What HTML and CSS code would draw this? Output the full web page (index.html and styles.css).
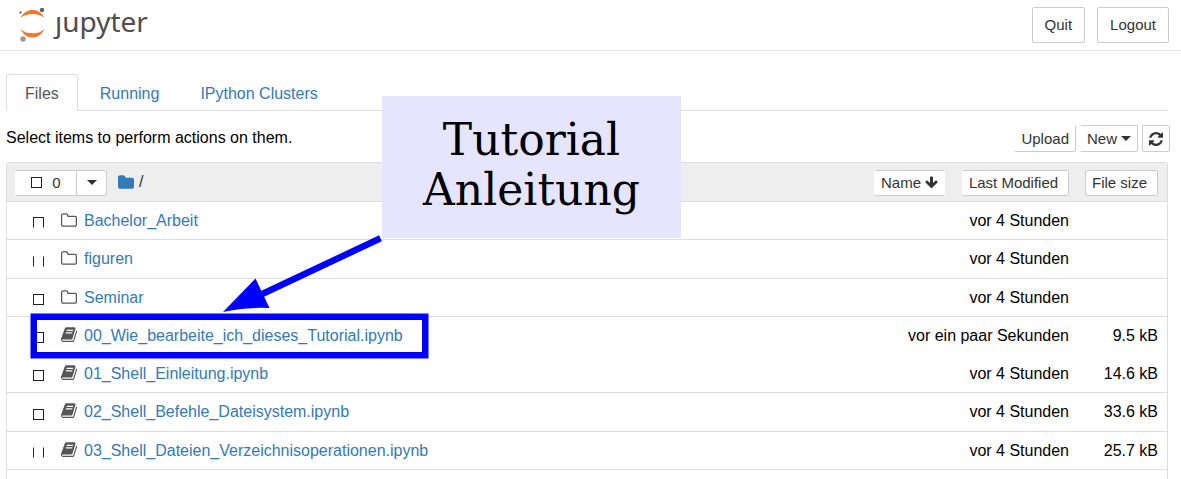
FILE: index.html
```html
<!DOCTYPE html>
<html lang="de">
<head>
<meta charset="utf-8">
<title>Jupyter – Tutorial Anleitung</title>
<link rel="stylesheet" href="styles.css">
</head>
<body>
<svg class="defs" aria-hidden="true">
  <symbol id="folder-o" viewBox="0 0 1664 1664"><path d="M1536 1312v-704q0-40-28-68t-68-28h-704q-40 0-68-28t-28-68v-64q0-40-28-68t-68-28h-320q-40 0-68 28t-28 68v960q0 40 28 68t68 28h1216q40 0 68-28t28-68zm128-704v704q0 92-66 158t-158 66h-1216q-92 0-158-66t-66-158v-960q0-92 66-158t158-66h320q92 0 158 66t66 158v32h672q92 0 158 66t66 158z"/></symbol>
  <symbol id="folder" viewBox="0 0 1664 1664"><path d="M1664 608v704q0 92-66 158t-158 66h-1216q-92 0-158-66t-66-158v-960q0-92 66-158t158-66h320q92 0 158 66t66 158v32h672q92 0 158 66t66 158z"/></symbol>
  <symbol id="book" viewBox="64 96 1664 1664"><path d="M1703 478q40 57 18 129l-275 906q-19 64-76.500 107.500t-122.500 43.500h-923q-77 0-148.500-53.500t-99.500-131.500q-24-67-2-127 0-4 3-27t4-37q1-8-3-21.500t-3-19.500q2-11 8-21t16.500-23.500 16.500-23.500q23-38 45-91.500t30-91.500q3-10 .5-30t-.5-28q3-11 17-28t17-23q21-36 42-92t25-90q1-9-2.500-32t.5-28q4-13 22-30.500t22-22.500q19-26 42.500-84.500t27.500-96.500q1-8-3-25.500t-2-26.500q2-8 9-18t18-23 17-21q8-12 16.500-30.500t15-35 16-36 19.500-32 26.500-23.500 36-11.500 47.500 5.500l-1 3q38-9 51-9h761q74 0 114 56t18 130l-274 906q-36 119-71.500 153.500t-128.500 34.500h-869q-27 0-38 15-11 16-1 43 24 70 144 70h923q29 0 56-15.500t35-41.500l300-987q7-22 5-57 38 15 59 43zm-1064 2q-4 13 2 22.500t20 9.500h608q13 0 25.500-9.500t16.500-22.500l21-64q4-13-2-22.500t-20-9.500h-608q-13 0-25.500 9.500t-16.500 22.500zm-83 256q-4 13 2 22.500t20 9.500h608q13 0 25.500-9.500t16.500-22.500l21-64q4-13-2-22.500t-20-9.500h-608q-13 0-25.500 9.500t-16.500 22.500z"/></symbol>
  <symbol id="refresh" viewBox="128 128 1536 1536"><path d="M1639 1056q0 5-1 7-64 268-268 434.500t-478 166.500q-146 0-282.500-55t-243.500-157l-129 129q-19 19-45 19t-45-19-19-45v-448q0-26 19-45t45-19h448q26 0 45 19t19 45-19 45l-137 137q71 66 161 102t187 36q134 0 250-65t186-179q11-17 53-117 8-23 30-23h192q13 0 22.500 9.500t9.500 22.500zm25-800v448q0 26-19 45t-45 19h-448q-26 0-45-19t-19-45 19-45l138-138q-148-137-349-137-134 0-250 65t-186 179q-11 17-53 117-8 23-30 23h-199q-13 0-22.500-9.500t-9.500-22.500v-7q65-268 270-434.500t480-166.500q146 0 284 55.500t245 156.500l130-129q19-19 45-19t45 19 19 45z"/></symbol>
  <symbol id="arrow-down" viewBox="64 64 1664 1664"><path d="M1675 832q0 53-37 90l-651 652q-39 37-91 37-53 0-90-37l-651-652q-38-36-38-90 0-53 38-91l74-75q39-37 91-37 53 0 90 37l294 294v-704q0-52 38-90t90-38h128q52 0 90 38t38 90v704l294-294q37-37 90-37 52 0 91 37l75 75q37 39 37 91z"/></symbol>
  <symbol id="caret" viewBox="0 0 10 5"><path d="M0 0H10L5 5z"/></symbol>
</svg>

<header class="header">
  <a class="logo" href="#" aria-label="jupyter">
    <svg class="logo-mark" viewBox="0 0 28 36" aria-hidden="true">
      <path fill="#f37726" d="M1.500 11C4 5.500 9 3 13.500 3S23 5.500 25.500 11C22 8 18 7 13.500 7S5 8 1.500 11zM1.500 22C4 28 9 30.500 13.500 30.500S23 28 25.500 22C22 25.300 18 26.300 13.500 26.300S5 25.300 1.500 22z"/>
      <circle cx="23" cy="3" r="2.200" fill="#616262"/>
      <circle cx="1.500" cy="5.500" r="1.200" fill="#767677"/>
      <circle cx="4" cy="32" r="2.700" fill="#989798"/>
    </svg>
    <span class="logo-text">ȷupyter</span>
  </a>
  <div class="session">
    <button class="btn btn-large" type="button">Quit</button>
    <button class="btn btn-large" type="button">Logout</button>
  </div>
</header>

<main class="main">
  <nav class="tabs">
    <a class="tab tab-active" href="#files">Files</a>
    <a class="tab" href="#running">Running</a>
    <a class="tab" href="#clusters">IPython Clusters</a>
  </nav>

  <div class="toolbar">
    <p class="hint">Select items to perform actions on them.</p>
    <div class="actions">
      <button class="btn btn-medium open-left open-top" type="button">Upload</button>
      <button class="btn btn-medium open-left" type="button">New <svg class="caret"><use href="#caret"/></svg></button>
      <button class="btn btn-medium" type="button" aria-label="Refresh"><svg class="icon-refresh"><use href="#refresh"/></svg></button>
    </div>
  </div>

  <section class="panel" id="files">
    <table class="files">
      <thead>
        <tr>
          <th>
            <div class="head-left">
              <div class="select-group">
                <label class="btn btn-small select-all open-left"><input class="tick" type="checkbox" aria-label="Select all">0</label>
                <button class="btn btn-small select-menu" type="button" aria-label="Select menu"><svg class="caret"><use href="#caret"/></svg></button>
              </div>
              <a class="crumb" href="#" aria-label="Home"><svg class="icon"><use href="#folder"/></svg></a>
              <span class="slash">/</span>
            </div>
          </th>
          <th>
            <div class="head-right">
              <button class="btn btn-small open-left open-right" type="button">Name <svg class="icon-small"><use href="#arrow-down"/></svg></button>
              <button class="btn btn-small open-left last-modified" type="button">Last Modified</button>
            </div>
          </th>
          <th class="size"><div class="head-right"><button class="btn btn-small file-size" type="button">File size</button></div></th>
        </tr>
      </thead>
      <tbody>
        <tr>
          <td><div class="item"><input class="tick open-bottom" type="checkbox" aria-label="Bachelor_Arbeit"><svg class="icon"><use href="#folder-o"/></svg><a href="#">Bachelor_Arbeit</a></div></td>
          <td class="time">vor 4 Stunden</td><td class="size"></td>
        </tr>
        <tr>
          <td><div class="item"><input class="tick open-bottom open-top" type="checkbox" aria-label="figuren"><svg class="icon"><use href="#folder-o"/></svg><a href="#">figuren</a></div></td>
          <td class="time">vor 4 Stunden</td><td class="size"></td>
        </tr>
        <tr>
          <td><div class="item"><input class="tick" type="checkbox" aria-label="Seminar"><svg class="icon"><use href="#folder-o"/></svg><a href="#">Seminar</a></div></td>
          <td class="time">vor 4 Stunden</td><td class="size"></td>
        </tr>
        <tr class="current">
          <td><div class="item"><input class="tick" type="checkbox" aria-label="00_Wie_bearbeite_ich_dieses_Tutorial.ipynb"><svg class="icon"><use href="#book"/></svg><a href="#">00_Wie_bearbeite_ich_dieses_Tutorial.ipynb</a></div></td>
          <td class="time">vor ein paar Sekunden</td><td class="size">9.5 kB</td>
        </tr>
        <tr>
          <td><div class="item"><input class="tick" type="checkbox" aria-label="01_Shell_Einleitung.ipynb"><svg class="icon"><use href="#book"/></svg><a href="#">01_Shell_Einleitung.ipynb</a></div></td>
          <td class="time">vor 4 Stunden</td><td class="size">14.6 kB</td>
        </tr>
        <tr>
          <td><div class="item"><input class="tick" type="checkbox" aria-label="02_Shell_Befehle_Dateisystem.ipynb"><svg class="icon"><use href="#book"/></svg><a href="#">02_Shell_Befehle_Dateisystem.ipynb</a></div></td>
          <td class="time">vor 4 Stunden</td><td class="size">33.6 kB</td>
        </tr>
        <tr>
          <td><div class="item"><input class="tick open-bottom open-top" type="checkbox" aria-label="03_Shell_Dateien_Verzeichnisoperationen.ipynb"><svg class="icon"><use href="#book"/></svg><a href="#">03_Shell_Dateien_Verzeichnisoperationen.ipynb</a></div></td>
          <td class="time">vor 4 Stunden</td><td class="size">25.7 kB</td>
        </tr>
      </tbody>
    </table>
  </section>
</main>

<svg class="pointer" viewBox="0 0 440 370" aria-hidden="true">
  <rect x="33.750" y="316.750" width="391.500" height="38.500" fill="none" stroke="#00f" stroke-width="6.500"/>
  <path d="M380.500 238.300L258 296" stroke="#00f" stroke-width="6.500"/>
  <path d="M223 312L255.500 278.500L269.500 308Q245 307 223 312z" fill="#00f"/>
</svg>
<aside class="note">Tutorial<br>Anleitung</aside>
</body>
</html>
```

FILE: styles.css
```css
* { box-sizing: border-box; }

body {
  display: flex;
  flex-direction: column;
  position: relative;
  min-height: 100vh;
  margin: 0;
  background: #fff;
  color: #000;
  font: 16px/20px "Liberation Sans", Arial, sans-serif;
}

a { color: #337ab7; text-decoration: none; }
svg { flex: none; fill: currentColor; }
.defs { position: absolute; width: 0; height: 0; }
.icon { width: 16px; height: 16px; }
.icon-small { width: 13px; height: 13px; }
.icon-refresh { width: 14px; height: 14px; }
.caret { width: 10px; height: 5px; }

.header {
  display: flex;
  justify-content: space-between;
  align-items: flex-start;
  height: 51px;
  padding: 7px 12px 0 19px;
  border-bottom: 1px solid #e7e7e7;
}
.logo { display: flex; gap: 8px; color: #4e4e4e; }
.logo-mark { width: 28px; height: 36px; }
.logo-text { font: 28px/28px "Noto Sans", "Open Sans", sans-serif; }
.session { display: flex; gap: 12px; }

.btn {
  display: flex;
  align-items: center;
  justify-content: center;
  gap: 4px;
  margin: 0;
  border: 1px solid #ccc;
  border-radius: 2px;
  background: #fff;
  color: #333;
  font: 15px/20px "Liberation Sans", Arial, sans-serif;
  white-space: nowrap;
}
.btn-large { height: 36px; padding: 0 12px; }
.btn-medium { height: 27px; padding: 0 6px; }
.btn-small { height: 26px; padding: 0 6px; }
.open-left { border-left-color: transparent; }
.open-right { border-right-color: transparent; }
.open-top { border-top-color: transparent; }
.open-bottom { border-bottom-color: transparent; }

.main {
  display: flex;
  flex: 1;
  flex-direction: column;
  padding: 23px 13px 0 6px;
}
.tabs { display: flex; gap: 3px; border-bottom: 1px solid #ddd; }
.tab {
  height: 37px;
  margin-bottom: -1px;
  padding: 9px 18px 0;
  border: 1px solid transparent;
}
.tab-active {
  border-color: #ddd #ddd #fff;
  border-radius: 3px 3px 0 0;
  background: #fff;
  color: #555;
}

.toolbar {
  display: flex;
  justify-content: space-between;
  align-items: center;
  height: 51px;
  padding-top: 4px;
}
.hint { margin: 0 0 2px; }
.actions { display: flex; gap: 4px; margin-right: -2px; }

.panel { flex: 1; border: solid #ddd; border-width: 1px 1px 0; border-radius: 3px 3px 0 0; }
.files { width: 100%; border-collapse: separate; border-spacing: 0; }
.files th, .files td { padding: 0; border-bottom: 1px solid #ddd; }
.files th { height: 39px; background: #eee; font-weight: 400; }
.files td { height: 38px; }
.files tr:nth-child(4n + 2) td { height: 39px; }
.files .current td { border-bottom-color: transparent; }
.files .time { text-align: right; white-space: nowrap; }
.files .size { width: 98px; padding-right: 9px; text-align: right; }

.head-left, .head-right, .select-group, .item { display: flex; align-items: center; }
.head-left { padding: 1px 0 0 8px; }
.head-right { justify-content: flex-end; gap: 17px; padding-top: 1px; }
.select-all { gap: 10px; width: 62px; border-radius: 0; }
.select-menu { width: 31px; margin-left: -1px; }
.last-modified { width: 107px; padding: 0 10px 0 6px; }
.file-size { width: 73px; padding: 0 10px 0 6px; }
.crumb { display: flex; margin: 0 5px 2px 11px; }
.slash { margin-bottom: 2px; color: #333; }

.tick {
  appearance: none;
  width: 11px;
  height: 11px;
  margin: 0;
  border: 1px solid #222;
  background: #fff;
}
.tick.open-top { border-top-color: transparent; }
.tick.open-bottom { border-bottom-color: transparent; }
.item { padding-left: 26px; }
.item .tick { margin: 4px 17px 0 0; }
.item .icon { margin: 0 7px 2px 0; color: #555; }

/* Callout drawn over the file list */
.pointer { position: absolute; top: 0; left: 0; width: 440px; height: 370px; pointer-events: none; }
.note {
  position: absolute;
  top: 96px;
  left: 382px;
  width: 299px;
  padding: 19px 0 23px;
  background: #e5e5ff;
  font: 44px/50px "DejaVu Serif", serif;
  text-align: center;
}
```
